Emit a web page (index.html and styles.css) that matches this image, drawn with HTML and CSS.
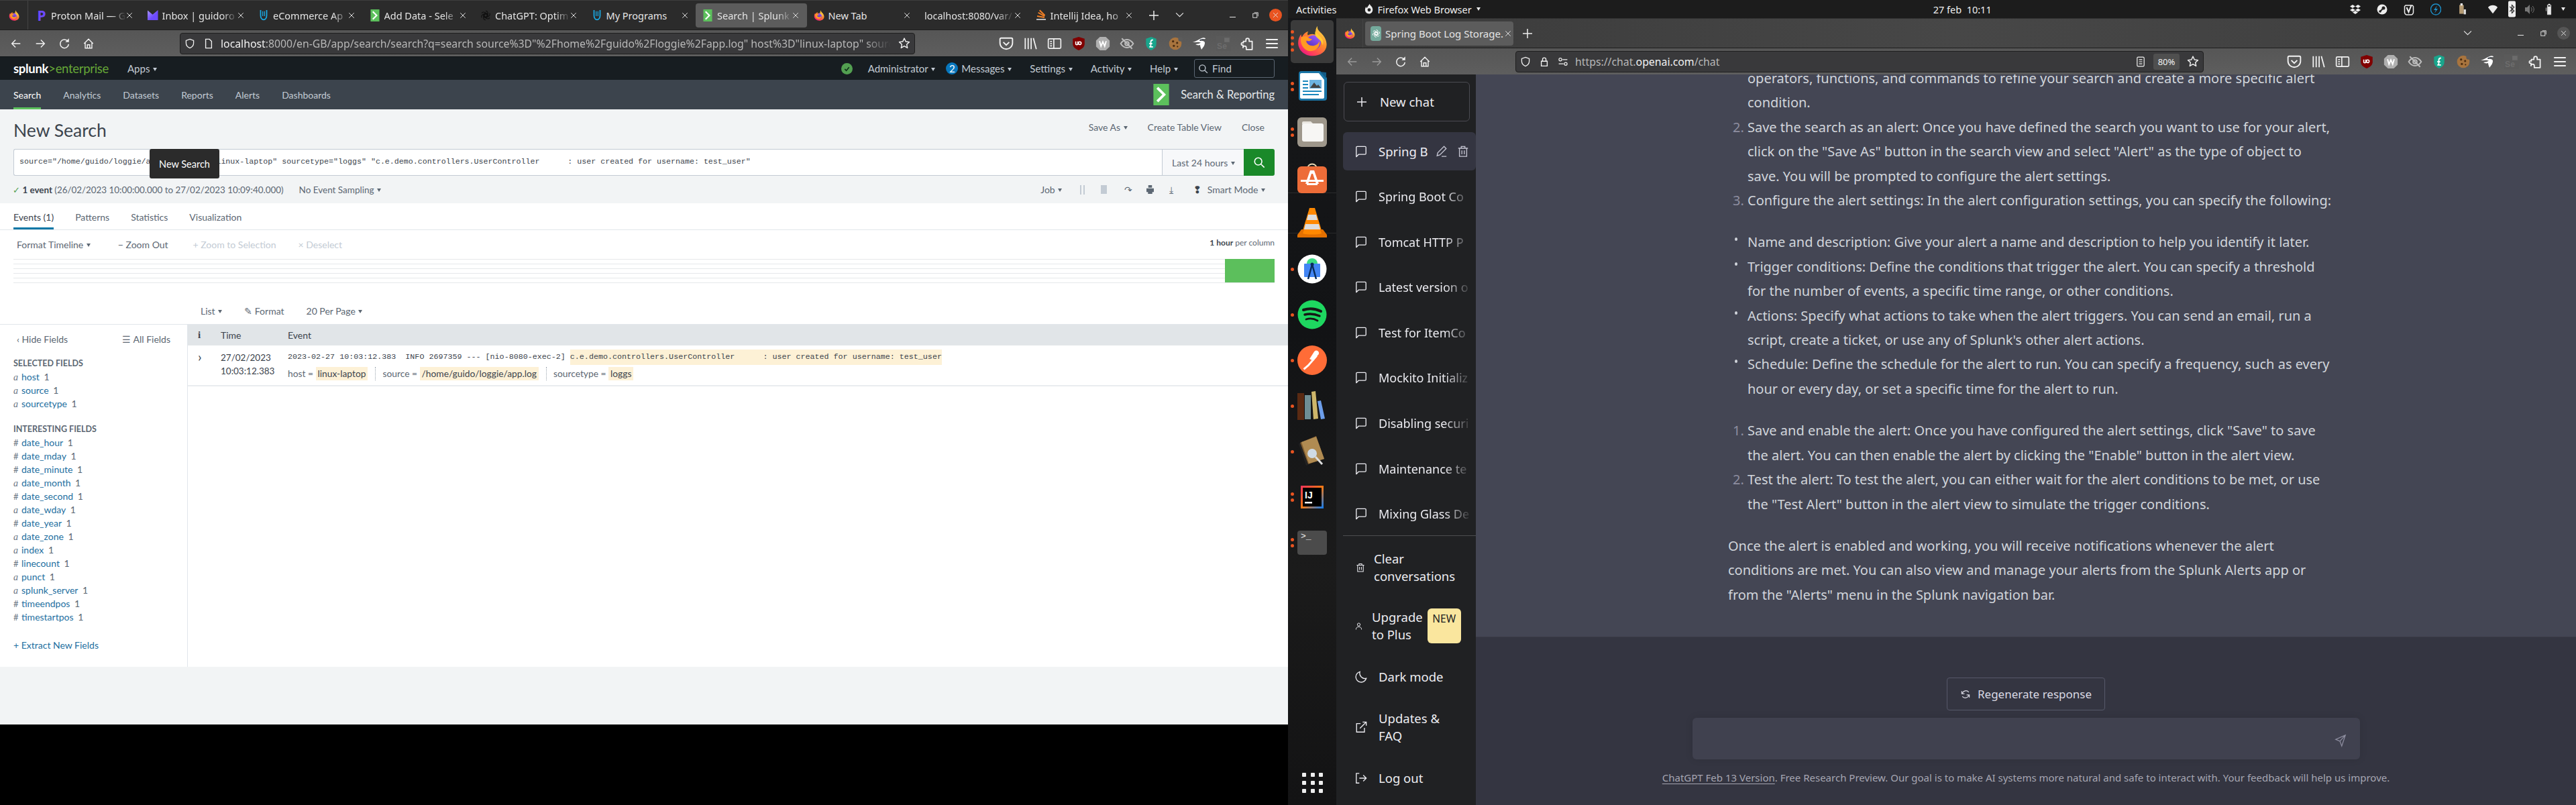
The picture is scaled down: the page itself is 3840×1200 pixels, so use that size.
FILE: index.html
```html
<!DOCTYPE html>
<html lang="en">
<head>
  <meta charset="UTF-8">
  <title>Search | Splunk and ChatGPT side by side</title>
  <link rel="stylesheet" href="styles.css">
</head>
<body>
  <svg class="defs" width="0" height="0">
    <defs>
      <linearGradient id="ffBody" x1="0.9" y1="0.1" x2="0.2" y2="1">
        <stop offset="0" stop-color="#ffe14d"/><stop offset="0.4" stop-color="#ff8a2a"/><stop offset="0.8" stop-color="#ff3a5e"/><stop offset="1" stop-color="#e31587"/>
      </linearGradient>
      <linearGradient id="ffCore" x1="0.8" y1="0" x2="0.2" y2="1">
        <stop offset="0" stop-color="#a05cff"/><stop offset="1" stop-color="#4a2bb5"/>
      </linearGradient>
      <symbol id="firefox" viewBox="0 0 64 64">
        <path fill="url(#ffBody)" d="M43 1c-1 7 3 10 8 15 6 6 11 14 11 24 0 14-13 23-29 23C16 63 3 51 3 36 3 28 6 22 9 18c0 3 1 5 2 6 2-6 7-10 13-12-2 3-2 6-1 8 6-3 12-3 18 0-3-6-2-14 2-19z"/>
        <circle cx="35" cy="35" r="15" fill="url(#ffCore)"/>
        <path fill="#ff9a22" d="M9 25c4-3 11-4 15 0 2 2 5 3 8 3-3 5-10 5-13 3 1 7 8 12 16 11 6-1 11-5 12-10 3 12-8 22-20 21C16 52 6 39 9 25z"/>
        <path fill="#ffcc33" d="M39 11c3 7 11 11 15 20 1 3 1 7 0 10-2-9-9-13-13-17-3-3-4-8-2-13z"/>
      </symbol>
      <symbol id="udemy" viewBox="0 0 16 20">
        <path fill="none" stroke="#1aa7e0" stroke-width="2" d="M3 1v9c0 4 2 7 5 7s5-3 5-7V1"/>
        <path fill="none" stroke="#1aa7e0" stroke-width="1.4" d="M6.500 3v8M9.500 3v8"/>
      </symbol>
      <symbol id="chev-green" viewBox="0 0 16 22">
        <rect width="16" height="22" fill="#5cc05c"/>
        <path fill="none" stroke="#fff" stroke-width="2.6" d="M4 4l7 7-7 7"/>
      </symbol>
      <symbol id="openai" viewBox="0 0 20 20">
        <g fill="none" stroke="currentColor" stroke-width="1.5">
          <circle cx="10" cy="10" r="3.4"/><path d="M10 1.600a4 4 0 0 1 4 4v5l-4 2.300M17.300 5.800a4 4 0 0 1-1.500 5.500l-4.300 2.500-4-2.300M17.300 14.200a4 4 0 0 1-5.500 1.500l-4.300-2.500V8.600M10 18.400a4 4 0 0 1-4-4v-5l4-2.300M2.700 14.200a4 4 0 0 1 1.500-5.500l4.300-2.500 4 2.300M2.700 5.800a4 4 0 0 1 5.500-1.500l4.300 2.500v4.600"/>
        </g>
      </symbol>
      <symbol id="back" viewBox="0 0 20 20"><path fill="none" stroke="currentColor" stroke-width="1.6" d="M17 10H3.500M9 4l-6 6 6 6"/></symbol>
      <symbol id="fwd" viewBox="0 0 20 20"><path fill="none" stroke="currentColor" stroke-width="1.6" d="M3 10h13.500M11 4l6 6-6 6"/></symbol>
      <symbol id="reload" viewBox="0 0 20 20"><path fill="none" stroke="currentColor" stroke-width="1.7" d="M15.500 6A7 7 0 1 0 17 11"/><path fill="currentColor" d="M17.500 1.500v6h-6z"/></symbol>
      <symbol id="home" viewBox="0 0 20 20"><path fill="none" stroke="currentColor" stroke-width="1.6" d="M2.500 10L10 2.500l7.500 7.500M4.500 9v8.500h11V9M8 17.500V12h4v5.500"/></symbol>
      <symbol id="shield" viewBox="0 0 20 20"><path fill="none" stroke="currentColor" stroke-width="1.6" d="M10 1.800l7 2.400v5c0 4.600-3 7.600-7 9-4-1.400-7-4.400-7-9v-5z"/></symbol>
      <symbol id="page" viewBox="0 0 20 20"><path fill="none" stroke="currentColor" stroke-width="1.7" d="M4.500 1.800h7l4 4v12.400h-11z"/></symbol>
      <symbol id="lock" viewBox="0 0 20 20"><path fill="none" stroke="currentColor" stroke-width="1.7" d="M4.500 9h11v9h-11zM6.800 9V5.800a3.200 3.200 0 0 1 6.400 0V9"/></symbol>
      <symbol id="perm" viewBox="0 0 20 20"><g fill="none" stroke="currentColor" stroke-width="1.5"><path d="M9 6h9M2 14h9"/><circle cx="5" cy="6" r="2.600"/><circle cx="15" cy="14" r="2.600"/></g></symbol>
      <symbol id="star" viewBox="0 0 20 20"><path fill="none" stroke="currentColor" stroke-width="1.6" stroke-linejoin="round" d="M10 1.800l2.500 5.400 5.800.7-4.300 4 1.200 5.800-5.200-3-5.200 3 1.200-5.800-4.300-4 5.800-.7z"/></symbol>
      <symbol id="pocket" viewBox="0 0 20 20"><path fill="none" stroke="currentColor" stroke-width="1.7" d="M3 2.500h14a1.500 1.500 0 0 1 1.500 1.500v5c0 5-4 8.500-8.500 8.500S1.500 14 1.500 9V4A1.500 1.500 0 0 1 3 2.500z"/><path fill="none" stroke="currentColor" stroke-width="1.7" d="M6 8l4 4 4-4"/></symbol>
      <symbol id="library" viewBox="0 0 20 20"><path fill="none" stroke="currentColor" stroke-width="1.6" d="M3 2.500v15M7 2.500v15M11 2.500v15M14 2.500l4 15"/></symbol>
      <symbol id="panel" viewBox="0 0 20 20"><g fill="none" stroke="currentColor" stroke-width="1.5"><rect x="1.500" y="3.500" width="17" height="13" rx="1.500"/><path d="M9 3.500v13M4 7h2.500M4 10h2.500M4 13h2.500"/></g></symbol>
      <symbol id="ublock" viewBox="0 0 20 20"><path fill="#800000" d="M10 1l8 2.400v7c0 4-3.500 7-8 8.600-4.500-1.600-8-4.600-8-8.600v-7z"/><path fill="none" stroke="#fff" stroke-width="1.500" d="M6 7v3.500c0 1.500 2.800 1.500 2.800 0V7M11.500 7.500a1.900 1.900 0 1 1-.01 3.800 1.900 1.900 0 0 1 .01-3.800z"/></symbol>
      <symbol id="wext" viewBox="0 0 20 20"><path fill="#b0b0b0" d="M6 .8h8l5.200 5.200v8L14 19.200H6L.8 14V6z"/><path fill="none" stroke="#fff" stroke-width="1.700" d="M5.500 6.500l2 7 2.500-6 2.500 6 2-7"/></symbol>
      <symbol id="eyeoff" viewBox="0 0 20 20"><g fill="none" stroke="#bdbdbd" stroke-width="1.800"><path d="M1.500 10C4 6 7 4.500 10 4.500S16 6 18.500 10C16 14 13 15.500 10 15.500S4 14 1.500 10z"/><circle cx="10" cy="10" r="2.600"/><path d="M3 3l14 14"/></g></symbol>
      <symbol id="lshield" viewBox="0 0 20 20"><path fill="#19a58c" d="M10 1l7 2.400v7c0 4-3 7-7 8.600-4-1.600-7-4.600-7-8.600v-7z"/><path fill="none" stroke="#fff" stroke-width="1.600" d="M12.500 5C10 5 9.500 6.500 9.500 8v4.500c0 1-1 2-2 2h5M7.500 10h4"/></symbol>
      <symbol id="cookie" viewBox="0 0 20 20"><circle cx="10" cy="10" r="8.500" fill="#a8743e"/><g fill="#4b2d12"><circle cx="7" cy="7" r="1.500"/><circle cx="12.500" cy="9" r="1.400"/><circle cx="8" cy="13" r="1.500"/><circle cx="13" cy="14" r="1"/></g><circle cx="17" cy="4" r="3" fill="#5b5b5b"/></symbol>
      <symbol id="swift" viewBox="0 0 22 20"><path fill="#fff" d="M1 8c4-1 8-4 13-6 4-1.500 6 0 6 1-3 0-7 1-9 3 4-.5 8 0 8 3 0 4-3 7-5 10-1-3-2-5-2-7-3 1-5 0-7-1 3-.5 6-1 8-2.500C10 7 5 8 1 8z"/><path fill="#111d2f" d="M12 4c3-1 5-1 6-.4-3 .4-5 1.400-7 2.400z"/></symbol>
      <symbol id="se" viewBox="0 0 20 20"><rect width="20" height="20" fill="#5a5a5a"/><rect x="11" y="2" width="7" height="6" fill="#6c6c6c"/><text x="1" y="17" font-family="'Liberation Sans',sans-serif" font-size="11" font-weight="700" fill="#6c6c6c">Se</text></symbol>
      <symbol id="puzzle" viewBox="0 0 20 20"><path fill="none" stroke="currentColor" stroke-width="1.600" stroke-linejoin="round" d="M4 7h3.500V5a2.200 2.200 0 0 1 4.400 0v2H16v11H8v-2.500a2.200 2.200 0 0 0-4.400 0V12H2c-1 0-1-3 0-3h2z"/></symbol>
      <symbol id="menu" viewBox="0 0 20 20"><path fill="none" stroke="currentColor" stroke-width="1.700" d="M2 4.500h16M2 10h16M2 15.500h16"/></symbol>
      <symbol id="reader" viewBox="0 0 20 20"><g fill="none" stroke="currentColor" stroke-width="1.500"><rect x="3.500" y="1.500" width="13" height="17" rx="2"/><path d="M7 6h6M7 10h6M7 14h6"/></g></symbol>
      <symbol id="search" viewBox="0 0 20 20"><g fill="none" stroke="currentColor" stroke-width="1.800"><circle cx="8.500" cy="8.500" r="6"/><path d="M13 13l5.500 5.500"/></g></symbol>
      <symbol id="close" viewBox="0 0 12 12"><path fill="none" stroke="currentColor" stroke-width="1.200" d="M1.500 1.500l9 9M10.500 1.500l-9 9"/></symbol>
      <symbol id="plus" viewBox="0 0 14 14"><path fill="none" stroke="currentColor" stroke-width="1.500" d="M7 0v14M0 7h14"/></symbol>
      <symbol id="down" viewBox="0 0 14 10"><path fill="none" stroke="currentColor" stroke-width="1.300" d="M1 1.500l6 6 6-6"/></symbol>
      <symbol id="min" viewBox="0 0 12 12"><path stroke="currentColor" stroke-width="1.400" d="M0 10h12"/></symbol>
      <symbol id="max" viewBox="0 0 12 12"><g fill="none" stroke="currentColor" stroke-width="1.200"><rect x="1" y="3" width="8" height="8"/><path d="M3.500 1H11v7.500"/></g></symbol>
      <symbol id="chat" viewBox="0 0 20 20"><path fill="none" stroke="currentColor" stroke-width="1.500" stroke-linejoin="round" d="M2 3a1.500 1.500 0 0 1 1.500-1.500h13A1.500 1.500 0 0 1 18 3v10a1.500 1.500 0 0 1-1.500 1.500H6L2 18.500z"/></symbol>
      <symbol id="pencil" viewBox="0 0 20 20"><path fill="none" stroke="currentColor" stroke-width="1.500" d="M2.500 17.500l1-5L14 2l3.500 3.500L7 16z M10 18.500h8"/></symbol>
      <symbol id="trash" viewBox="0 0 20 20"><path fill="none" stroke="currentColor" stroke-width="1.500" d="M2 5h16M7 5V2h6v3M4 5v13.500h12V5M8 8.500v6.500M12 8.500v6.500"/></symbol>
      <symbol id="user" viewBox="0 0 20 20"><g fill="none" stroke="currentColor" stroke-width="1.800"><circle cx="10" cy="5.500" r="3.800"/><path d="M2.500 19c0-5 3-7.500 7.500-7.500s7.500 2.500 7.500 7.500"/></g></symbol>
      <symbol id="moon" viewBox="0 0 20 20"><path fill="none" stroke="currentColor" stroke-width="1.500" d="M8 1.500a8.800 8.800 0 0 0 10.500 11A8.800 8.800 0 1 1 8 1.500z"/></symbol>
      <symbol id="external" viewBox="0 0 20 20"><path fill="none" stroke="currentColor" stroke-width="1.500" d="M9 4H2.500v14h13v-7M8 12L18.500 1.500M12.500 1.500h6v6"/></symbol>
      <symbol id="logout" viewBox="0 0 20 20"><path fill="none" stroke="currentColor" stroke-width="1.500" d="M7 2H2v16h5M7 10h11.500M13.500 5l5 5-5 5"/></symbol>
      <symbol id="send" viewBox="0 0 20 20"><path fill="none" stroke="currentColor" stroke-width="1.400" d="M18 1L2 8l7 3 3 8zM18 1L9 11"/></symbol>
      <symbol id="regen" viewBox="0 0 20 20"><path fill="none" stroke="currentColor" stroke-width="1.500" d="M3 4v5h5M17 16v-5h-5M4 8a7 7 0 0 1 12-2M16 12a7 7 0 0 1-12 2"/></symbol>
    </defs>
  </svg>

  <div class="screen">

    <section class="monitor-left">
      <div class="win-left">
        <header class="tabbar">
          <div class="tabbar-logo"><svg class="tab-ic"><use href="#firefox"/></svg></div>
          <div class="tab"><span class="proton">P</span><span class="tab-title">Proton Mail — G</span><svg class="tab-x"><use href="#close"/></svg></div>
          <div class="tab"><span class="pmail"></span><span class="tab-title">Inbox | guidoro</span><svg class="tab-x"><use href="#close"/></svg></div>
          <div class="tab"><svg class="tab-ic"><use href="#udemy"/></svg><span class="tab-title">eCommerce Ap</span><svg class="tab-x"><use href="#close"/></svg></div>
          <div class="tab"><svg class="tab-ic"><use href="#chev-green"/></svg><span class="tab-title">Add Data - Sele</span><svg class="tab-x"><use href="#close"/></svg></div>
          <div class="tab"><svg class="tab-ic dark-ic"><use href="#openai"/></svg><span class="tab-title">ChatGPT: Optim</span><svg class="tab-x"><use href="#close"/></svg></div>
          <div class="tab"><svg class="tab-ic"><use href="#udemy"/></svg><span class="tab-title plain">My Programs</span><svg class="tab-x"><use href="#close"/></svg></div>
          <div class="tab tab-active"><svg class="tab-ic"><use href="#chev-green"/></svg><span class="tab-title">Search | Splunk</span><svg class="tab-x"><use href="#close"/></svg></div>
          <div class="tab"><svg class="tab-ic"><use href="#firefox"/></svg><span class="tab-title plain">New Tab</span><svg class="tab-x"><use href="#close"/></svg></div>
          <div class="tab tab-noicon"><span class="tab-title">localhost:8080/var/</span><svg class="tab-x"><use href="#close"/></svg></div>
          <div class="tab"><span class="so"><i></i><i></i><i></i><i></i></span><span class="tab-title">Intellij Idea, ho</span><svg class="tab-x"><use href="#close"/></svg></div>
          <svg class="tab-plus"><use href="#plus"/></svg>
          <svg class="tab-down"><use href="#down"/></svg>
          <div class="win-btns">
            <svg class="win-min"><use href="#min"/></svg>
            <svg class="win-max"><use href="#max"/></svg>
            <span class="win-close"><svg><use href="#close"/></svg></span>
          </div>
        </header>

        <div class="toolbar">
          <svg class="nav-ic"><use href="#back"/></svg>
          <svg class="nav-ic"><use href="#fwd"/></svg>
          <svg class="nav-ic"><use href="#reload"/></svg>
          <svg class="nav-ic"><use href="#home"/></svg>
          <div class="urlbar urlbar-left">
            <svg class="url-ic"><use href="#shield"/></svg>
            <svg class="url-ic"><use href="#page"/></svg>
            <span class="url-text"><b>localhost</b>:8000/en-GB/app/search/search?q=search source%3D"%2Fhome%2Fguido%2Floggie%2Fapp.log" host%3D"linux-laptop" sourcetype%</span>
            <svg class="url-star"><use href="#star"/></svg>
          </div>
          <div class="ext-row">
            <svg class="ext"><use href="#pocket"/></svg>
            <svg class="ext"><use href="#library"/></svg>
            <svg class="ext"><use href="#panel"/></svg>
            <svg class="ext"><use href="#ublock"/></svg>
            <svg class="ext"><use href="#wext"/></svg>
            <svg class="ext"><use href="#eyeoff"/></svg>
            <svg class="ext"><use href="#lshield"/></svg>
            <svg class="ext"><use href="#cookie"/></svg>
            <svg class="ext"><use href="#swift"/></svg>
            <svg class="ext"><use href="#se"/></svg>
            <svg class="ext"><use href="#puzzle"/></svg>
            <svg class="ext"><use href="#menu"/></svg>
          </div>
        </div>

        <div class="splunk-bar">
          <div class="brand">splunk<em>&gt;enterprise</em></div>
          <span class="sp-menu apps">Apps <i class="caret"></i></span>
          <div class="sp-right">
            <span class="ok-dot"><svg viewBox="0 0 12 12"><path fill="none" stroke="#10301a" stroke-width="1.800" d="M2.500 6.500l2.500 2.500 4.500-5.500"/></svg></span>
            <span class="sp-menu admin">Administrator <i class="caret"></i></span>
            <span class="msg-badge">2</span>
            <span class="sp-menu msgs">Messages <i class="caret"></i></span>
            <span class="sp-menu settings">Settings <i class="caret"></i></span>
            <span class="sp-menu activity">Activity <i class="caret"></i></span>
            <span class="sp-menu help">Help <i class="caret"></i></span>
            <span class="find"><svg><use href="#search"/></svg>Find</span>
          </div>
        </div>

        <nav class="app-bar">
          <a class="app-link on">Search</a>
          <a class="app-link">Analytics</a>
          <a class="app-link">Datasets</a>
          <a class="app-link">Reports</a>
          <a class="app-link">Alerts</a>
          <a class="app-link">Dashboards</a>
          <div class="app-name"><svg><use href="#chev-green"/></svg>Search &amp; Reporting</div>
        </nav>

        <main class="sp-page">
          <div class="sp-head">
            <h1>New Search</h1>
            <div class="sp-actions">
              <span>Save As <i class="caret"></i></span>
              <span>Create Table View</span>
              <span>Close</span>
            </div>
          </div>

          <div class="search-row">
            <div class="search-input">source="/home/guido/loggie/app.log" host="linux-laptop" sourcetype="loggs" "c.e.demo.controllers.UserController      : user created for username: test_user"</div>
            <div class="time-pick">Last 24 hours <i class="caret"></i></div>
            <div class="search-go"><svg><use href="#search"/></svg></div>
            <div class="tooltip">New Search</div>
          </div>

          <div class="status-row">
            <span class="status-text"><span class="tick">✓</span> <b>1 event</b> (26/02/2023 10:00:00.000 to 27/02/2023 10:09:40.000)</span>
            <span class="sampling">No Event Sampling <i class="caret"></i></span>
            <div class="job-tools">
              <span class="job">Job <i class="caret"></i></span>
              <span class="jt"><span class="pause"></span></span>
              <span class="jt"><span class="stop"></span></span>
              <span class="jt jt-share">↷</span>
              <span class="jt"><svg viewBox="0 0 12 14"><path fill="#5c6773" d="M3 0h6v4H3zM0 5h12v6H9.500v3h-7v-3H0z"/></svg></span>
              <span class="jt">⤓</span>
              <span class="mode"><b>❢</b> Smart Mode <i class="caret"></i></span>
            </div>
          </div>

          <div class="results">
            <div class="res-tabs">
              <span class="res-tab on">Events (1)</span>
              <span class="res-tab">Patterns</span>
              <span class="res-tab">Statistics</span>
              <span class="res-tab">Visualization</span>
            </div>
            <div class="tl-tools">
              <span>Format Timeline <i class="caret"></i></span>
              <span class="tl-zoom">− Zoom Out</span>
              <span class="off">+ Zoom to Selection</span>
              <span class="off">× Deselect</span>
              <span class="tl-scale"><b>1 hour</b> per column</span>
            </div>
            <div class="timeline"><div class="tl-bar"></div></div>
            <div class="list-tools">
              <span>List <i class="caret"></i></span>
              <span>✎ Format</span>
              <span>20 Per Page <i class="caret"></i></span>
            </div>

            <div class="res-body">
              <aside class="fields">
                <div class="fields-top">
                  <span>‹ Hide Fields</span>
                  <span class="all-fields">☰ All Fields</span>
                </div>
                <h4>SELECTED FIELDS</h4>
                <ul class="field-list">
                  <li><i>a</i><a>host</a> 1</li>
                  <li><i>a</i><a>source</a> 1</li>
                  <li><i>a</i><a>sourcetype</a> 1</li>
                </ul>
                <h4 class="second">INTERESTING FIELDS</h4>
                <ul class="field-list">
                  <li><i class="num">#</i><a>date_hour</a> 1</li>
                  <li><i class="num">#</i><a>date_mday</a> 1</li>
                  <li><i class="num">#</i><a>date_minute</a> 1</li>
                  <li><i>a</i><a>date_month</a> 1</li>
                  <li><i class="num">#</i><a>date_second</a> 1</li>
                  <li><i>a</i><a>date_wday</a> 1</li>
                  <li><i class="num">#</i><a>date_year</a> 1</li>
                  <li><i>a</i><a>date_zone</a> 1</li>
                  <li><i>a</i><a>index</a> 1</li>
                  <li><i class="num">#</i><a>linecount</a> 1</li>
                  <li><i>a</i><a>punct</a> 1</li>
                  <li><i>a</i><a>splunk_server</a> 1</li>
                  <li><i class="num">#</i><a>timeendpos</a> 1</li>
                  <li><i class="num">#</i><a>timestartpos</a> 1</li>
                </ul>
                <a class="extract">+ Extract New Fields</a>
              </aside>
              <div class="events">
                <div class="ev-head">
                  <span class="col-i">i</span><span class="col-time">Time</span><span>Event</span>
                </div>
                <div class="ev-row">
                  <span class="col-i ev-chev">›</span>
                  <div class="col-time">27/02/2023<br>10:03:12.383</div>
                  <div class="ev-main">
                    <div class="ev-raw">2023-02-27 10:03:12.383  INFO 2697359 --- [nio-8080-exec-2] <mark>c.e.demo.controllers.UserController      : user created for username: test_user</mark></div>
                    <div class="ev-meta">
                      <span class="kv">host = <mark>linux-laptop</mark></span>
                      <span class="kv">source = <mark>/home/guido/loggie/app.log</mark></span>
                      <span class="kv">sourcetype = <mark>loggs</mark></span>
                    </div>
                  </div>
                </div>
              </div>
            </div>
          </div>
        </main>
      </div>
    </section>

    <section class="monitor-right">
      <div class="gnome-bar">
        <span class="activities">Activities</span>
        <span class="gnome-app"><svg viewBox="0 0 16 18"><path fill="#eee" d="M9 0c0 3 5 4 5 10 0 4-3 7-6.500 7S1 14 1 10.500C1 8 2 6 3 5c0 1 .5 2 1 2.500C5 5 7 3 9 0z"/><circle cx="8" cy="10.500" r="2.800" fill="#222"/></svg>Firefox Web Browser <i class="caret caret-white"></i></span>
        <span class="clock">27 feb  10:11</span>
        <div class="tray">
          <svg viewBox="0 0 16 16"><path fill="#eee" d="M4 1l4 2.500L4 6 0 3.500zM12 1l4 2.500L12 6 8 3.500zM4 6.500L8 9l-4 2.500L0 9zM12 6.500L16 9l-4 2.500L8 9zM4 12.500L8 10l4 2.500L8 15z"/></svg>
          <svg viewBox="0 0 16 16"><circle cx="8" cy="8" r="7.500" fill="#eee"/><circle cx="10" cy="6" r="2.500" fill="#222"/><circle cx="5" cy="11" r="1.800" fill="#222"/><path stroke="#222" stroke-width="2" d="M5 11l5-5"/></svg>
          <svg viewBox="0 0 16 18"><path fill="none" stroke="#eee" stroke-width="1.500" d="M3 3h10l1.500 1.500v9c0 2-2 3.500-3 3.500h-7c-1 0-3-1.500-3-3.500v-9z"/><path fill="none" stroke="#eee" stroke-width="2" d="M4.500 6l3 7 4-10"/></svg>
          <svg viewBox="0 0 16 18"><path fill="none" stroke="#1d8fc9" stroke-width="1.500" d="M8 1a7.500 8 0 1 1-.01 0z"/><path fill="#1d8fc9" d="M10 3L5 10h3l-2 5 5-7H8z"/></svg>
          <svg viewBox="0 0 14 22"><path fill="#b49a72" d="M1 3h8v16H1z"/><path fill="#ddd" d="M9 11h4v9H9z"/><path fill="#eee" d="M3 0h4v4H3z"/></svg>
          <svg viewBox="0 0 18 18"><path fill="#eee" d="M9 16L1 5.500C3 3 6 2 9 2s6 1 8 3.500z"/></svg>
          <svg class="bt" viewBox="0 0 12 26"><rect width="12" height="26" rx="2" fill="#eee"/><path fill="none" stroke="#222" stroke-width="1.200" d="M2.500 9l7 7-3.500 3.500v-13L9.500 10l-7 7"/></svg>
          <svg viewBox="0 0 16 18"><path fill="#777" d="M1 6h3l4-4v14l-4-4H1z"/><path fill="none" stroke="#777" d="M10 6c1.500 2 1.500 4 0 6M12 4c3 3 3 7 0 10"/></svg>
          <svg viewBox="0 0 18 28"><path fill="none" stroke="#eee" stroke-width="1.500" d="M5 4h8v22H5z"/><path fill="#eee" d="M7 1h4v3H7zM6 7h6v18H6z"/><path fill="#999" d="M1 10h2v8H1z"/></svg>
          <i class="caret caret-white"></i>
        </div>
      </div>

      <div class="desk">
        <aside class="dock">
          <div class="dock-item dock-on"><span class="dots"><i></i><i></i><i></i><i></i></span><svg class="dock-ff"><use href="#firefox"/></svg></div>
          <div class="dock-item"><span class="dots"><i></i><i></i></span>
            <svg class="dock-ic" viewBox="0 0 44 46"><path fill="#1a75a6" d="M34 0l10 10V40a4 4 0 0 1-4 4H6a4 4 0 0 1-4-4V4a4 4 0 0 1 4-4z"/><path fill="#fff" d="M6 3h26l8 10v26a2 2 0 0 1-2 2H6a2 2 0 0 1-2-2V5a2 2 0 0 1 2-2z"/><path fill="#135a84" d="M34 1l9 1v9z"/><path fill="#1a87bd" d="M8 14h8v2H8zM8 19h8v2H8zM8 24h8v2H8zM8 29h28v2H8zM8 34h24v2H8z"/><rect x="18" y="13" width="18" height="13" fill="#6db3e0"/><path fill="#444" d="M19 25l6-8 4 5 2-2 4 5z"/></svg></div>
          <div class="dock-item"><span class="dots"><i></i><i></i></span>
            <svg class="dock-ic" viewBox="0 0 44 44"><rect width="44" height="44" rx="6" fill="#9e978b"/><path fill="#e9e6e0" d="M7 8a2 2 0 0 1 2-2h11l4 4H7z"/><rect x="7" y="9" width="32" height="27" rx="3" fill="#f7f6f4"/></svg></div>
          <div class="dock-item">
            <svg class="dock-ic" viewBox="0 0 44 46"><path fill="none" stroke="#e9d9b4" stroke-width="2" d="M15 10c0-10 14-10 14 0"/><rect y="6" width="44" height="40" rx="6" fill="#ed6c38"/><path fill="#fff" d="M19 12h6l7 20h-4l-5-15h-2l-5 15h-4zM5 26h34v3H5zM14 31h16v3H14z"/></svg></div>
          <div class="dock-item">
            <svg class="dock-ic" viewBox="0 0 44 46"><path fill="#ff8800" d="M18 0h8l12 40H6z"/><path fill="#ddd" d="M16 10h12l2 8H14zM12 24h20l2 8H10z"/><path fill="#e37000" d="M0 40l6-8h4l-2 6c6 2 22 2 28 0l-2-6h4l6 8v4H0z"/></svg></div>
          <div class="dock-item"><span class="dots"><i></i></span>
            <svg class="dock-ic" viewBox="0 0 44 44"><circle cx="22" cy="22" r="21.500" fill="#fff"/><path fill="#3ddc84" d="M14 14a8 8 0 0 1 16 0z"/><rect x="10" y="14" width="24" height="20" rx="1" fill="#4285f4"/><path fill="none" stroke="#0a2d5c" stroke-width="2.500" d="M22 15L16 37M22 15l6 22"/><circle cx="22" cy="15" r="2.500" fill="#0a2d5c"/></svg></div>
          <div class="dock-item"><span class="dots"><i></i></span>
            <svg class="dock-ic" viewBox="0 0 44 44"><ellipse cx="22" cy="22" rx="21.500" ry="21.500" fill="#1ed760"/><g fill="none" stroke="#161616" stroke-linecap="round"><path stroke-width="4" d="M9 15c9-3 18-2 26 2"/><path stroke-width="3.400" d="M11 22c8-2 15-1 22 2"/><path stroke-width="2.800" d="M13 29c6-2 12-1 17 2"/></g></svg></div>
          <div class="dock-item"><span class="dots"><i></i></span>
            <svg class="dock-ic" viewBox="0 0 46 46"><circle cx="23" cy="23" r="23" fill="#ff6c37"/><path fill="none" stroke="#fff" stroke-width="3" d="M10 37l7-6 13-15"/><path fill="#fff" d="M26 10a4 4 0 1 1 6 5l-7 9-6-3z"/></svg></div>
          <div class="dock-item"><span class="dots"><i></i></span>
            <svg class="dock-ic" viewBox="0 0 44 44"><rect x="0" y="3" width="10" height="40" fill="#5a2a12"/><rect x="11" y="6" width="9" height="36" fill="#6f8e94"/><path fill="#cdb66a" d="M21 1l6-1 4 41-7 1z"/><path fill="#6d9eeb" d="M30 15l5-1 6 27-6 1z"/></svg></div>
          <div class="dock-item"><span class="dots"><i></i></span>
            <svg class="dock-ic" viewBox="0 0 44 46"><path fill="#7d5b2f" d="M4 10L28 0l12 34-24 8z"/><path fill="#b08b52" d="M6 9L28 1l12 33-23 7z"/><path fill="#222" d="M4 10l12 33-3 1L2 12z"/><circle cx="22" cy="26" r="7" fill="#cfdbe6"/><path stroke="#ddd" stroke-width="3" d="M27 31l10 11"/></svg></div>
          <div class="dock-item"><span class="dots"><i></i><i></i></span>
            <svg class="dock-ic dock-ij" viewBox="0 0 34 34"><defs><linearGradient id="ij" x1="0" y1="0" x2="1" y2="1"><stop offset="0" stop-color="#fe315d"/><stop offset="0.5" stop-color="#f97a12"/><stop offset="1" stop-color="#087cfa"/></linearGradient></defs><rect width="34" height="34" fill="url(#ij)"/><rect x="3" y="3" width="28" height="28" fill="#000"/><text x="6" y="19" font-family="'Liberation Sans',sans-serif" font-size="14" font-weight="700" fill="#fff">IJ</text><rect x="6" y="24" width="11" height="2.500" fill="#fff"/></svg></div>
          <div class="dock-item"><span class="dots"><i></i><i></i></span>
            <div class="term">&gt;_</div></div>
          <div class="apps-grid"><i></i><i></i><i></i><i></i><i></i><i></i><i></i><i></i><i></i></div>
        </aside>

        <div class="win-right">
          <header class="tabbar tabbar-right">
            <div class="tabbar-logo"><svg class="tab-ic"><use href="#firefox"/></svg></div>
            <div class="tab tab-active tab-chat"><span class="gpt-ic"><svg><use href="#openai"/></svg></span><span class="tab-title">Spring Boot Log Storage.</span><svg class="tab-x"><use href="#close"/></svg></div>
            <svg class="tab-plus"><use href="#plus"/></svg>
            <svg class="tab-down"><use href="#down"/></svg>
            <div class="win-btns">
              <svg class="win-min"><use href="#min"/></svg>
              <svg class="win-max"><use href="#max"/></svg>
              <span class="win-close grey"><svg><use href="#close"/></svg></span>
            </div>
          </header>
          <div class="toolbar toolbar-right">
            <svg class="nav-ic dim"><use href="#back"/></svg>
            <svg class="nav-ic dim"><use href="#fwd"/></svg>
            <svg class="nav-ic"><use href="#reload"/></svg>
            <svg class="nav-ic"><use href="#home"/></svg>
            <div class="urlbar urlbar-right">
              <svg class="url-ic"><use href="#shield"/></svg>
              <svg class="url-ic"><use href="#lock"/></svg>
              <svg class="url-ic"><use href="#perm"/></svg>
              <span class="url-text"><s>https://chat.</s><b>openai.com</b><s>/chat</s></span>
              <svg class="url-reader"><use href="#reader"/></svg>
              <span class="zoom-pill">80%</span>
              <svg class="url-star"><use href="#star"/></svg>
            </div>
            <div class="ext-row">
              <svg class="ext"><use href="#pocket"/></svg>
              <svg class="ext"><use href="#library"/></svg>
              <svg class="ext"><use href="#panel"/></svg>
              <svg class="ext"><use href="#ublock"/></svg>
              <svg class="ext"><use href="#wext"/></svg>
              <svg class="ext"><use href="#eyeoff"/></svg>
              <svg class="ext"><use href="#lshield"/></svg>
              <svg class="ext"><use href="#cookie"/></svg>
              <svg class="ext"><use href="#swift"/></svg>
              <svg class="ext"><use href="#se"/></svg>
              <svg class="ext"><use href="#puzzle"/></svg>
              <svg class="ext"><use href="#menu"/></svg>
            </div>
          </div>

          <div class="gpt">
            <aside class="gpt-side">
              <div class="new-chat"><svg><use href="#plus"/></svg>New chat</div>
              <div class="chat-list">
                <div class="chat-row on"><svg class="chat-ic"><use href="#chat"/></svg><span class="chat-name">Spring B</span><svg class="row-act"><use href="#pencil"/></svg><svg class="row-act"><use href="#trash"/></svg></div>
                <div class="chat-row"><svg class="chat-ic"><use href="#chat"/></svg><span class="chat-name fade">Spring Boot Co</span></div>
                <div class="chat-row"><svg class="chat-ic"><use href="#chat"/></svg><span class="chat-name fade">Tomcat HTTP P</span></div>
                <div class="chat-row"><svg class="chat-ic"><use href="#chat"/></svg><span class="chat-name fade">Latest version o</span></div>
                <div class="chat-row"><svg class="chat-ic"><use href="#chat"/></svg><span class="chat-name fade">Test for ItemCo</span></div>
                <div class="chat-row"><svg class="chat-ic"><use href="#chat"/></svg><span class="chat-name fade">Mockito Initializ</span></div>
                <div class="chat-row"><svg class="chat-ic"><use href="#chat"/></svg><span class="chat-name fade">Disabling securi</span></div>
                <div class="chat-row"><svg class="chat-ic"><use href="#chat"/></svg><span class="chat-name fade">Maintenance te</span></div>
                <div class="chat-row"><svg class="chat-ic"><use href="#chat"/></svg><span class="chat-name fade">Mixing Glass De</span></div>
              </div>
              <div class="side-foot">
                <div class="foot-row clear"><svg class="small"><use href="#trash"/></svg><span>Clear<br>conversations</span></div>
                <div class="foot-row plus-row"><svg class="tiny"><use href="#user"/></svg><span>Upgrade<br>to Plus</span><span class="new-tag">NEW</span></div>
                <div class="foot-row"><svg><use href="#moon"/></svg><span>Dark mode</span></div>
                <div class="foot-row"><svg><use href="#external"/></svg><span>Updates &amp;<br>FAQ</span></div>
                <div class="foot-row"><svg><use href="#logout"/></svg><span>Log out</span></div>
              </div>
            </aside>

            <div class="gpt-main">
              <article class="thread">
                <ol start="1" class="no-mark">
                  <li>operators, functions, and commands to refine your search and create a more specific alert<br>condition.</li>
                </ol>
                <ol start="2">
                  <li>Save the search as an alert: Once you have defined the search you want to use for your alert,<br>click on the "Save As" button in the search view and select "Alert" as the type of object to<br>save. You will be prompted to configure the alert settings.</li>
                  <li>Configure the alert settings: In the alert configuration settings, you can specify the following:</li>
                </ol>
                <ul>
                  <li>Name and description: Give your alert a name and description to help you identify it later.</li>
                  <li>Trigger conditions: Define the conditions that trigger the alert. You can specify a threshold<br>for the number of events, a specific time range, or other conditions.</li>
                  <li>Actions: Specify what actions to take when the alert triggers. You can send an email, run a<br>script, create a ticket, or use any of Splunk's other alert actions.</li>
                  <li>Schedule: Define the schedule for the alert to run. You can specify a frequency, such as every<br>hour or every day, or set a specific time for the alert to run.</li>
                </ul>
                <ol>
                  <li>Save and enable the alert: Once you have configured the alert settings, click "Save" to save<br>the alert. You can then enable the alert by clicking the "Enable" button in the alert view.</li>
                  <li>Test the alert: To test the alert, you can either wait for the alert conditions to be met, or use<br>the "Test Alert" button in the alert view to simulate the trigger conditions.</li>
                </ol>
                <p>Once the alert is enabled and working, you will receive notifications whenever the alert<br>conditions are met. You can also view and manage your alerts from the Splunk Alerts app or<br>from the "Alerts" menu in the Splunk navigation bar.</p>
              </article>
              <div class="composer">
                <div class="regen"><svg><use href="#regen"/></svg>Regenerate response</div>
                <div class="prompt"><svg><use href="#send"/></svg></div>
                <div class="legal"><u>ChatGPT Feb 13 Version</u>. Free Research Preview. Our goal is to make AI systems more natural and safe to interact with. Your feedback will help us improve.</div>
              </div>
            </div>
          </div>
        </div>
      </div>
    </section>
  </div>
</body>
</html>
```

FILE: styles.css
```css
html, body {
  margin: 0;
  padding: 0;
  background: #000;
  overflow: hidden;
}
.defs {
  position: absolute;
}
.screen {
  display: flex;
  width: 3840px;
  height: 1200px;
  font-family: "Noto Sans", sans-serif;
}
svg {
  display: block;
}
i {
  font-style: normal;
}

/* left monitor */
.monitor-left {
  width: 1920px;
  height: 1200px;
  background: #000;
}
.win-left {
  height: 1080px;
  display: flex;
  flex-direction: column;
}

/* firefox chrome */
.tabbar {
  height: 43px;
  flex: none;
  display: flex;
  align-items: center;
  background: #2b2b2b;
  border-top: 1px solid #3d3d3d;
  box-sizing: content-box;
  color: #e4e4e4;
  font-size: 14.5px;
}
.tabbar-logo {
  width: 42px;
  height: 43px;
  display: flex;
  align-items: center;
  justify-content: center;
  border-right: 1px solid #444;
  box-sizing: border-box;
  margin-right: 2px;
}
.tab {
  width: 165.5px;
  height: 36px;
  flex: none;
  display: flex;
  align-items: center;
  box-sizing: border-box;
  padding-left: 10px;
  border-radius: 4px;
}
.tab-active {
  background: #5c5c5c;
}
.tab-ic {
  width: 16px;
  height: 18px;
  flex: none;
}
.dark-ic {
  color: #111;
}
.proton {
  width: 16px;
  flex: none;
  color: #6d4aff;
  font-weight: 700;
  font-size: 21px;
  line-height: 20px;
  text-align: center;
}
.pmail {
  width: 16px;
  height: 15px;
  flex: none;
  background: linear-gradient(135deg, #a995ff 0%, #6d4aff 60%);
  clip-path: polygon(0 0, 50% 45%, 100% 0, 100% 100%, 0 100%);
}
.so {
  width: 16px;
  flex: none;
  display: flex;
  flex-direction: column;
  gap: 2px;
  align-items: center;
}
.so i {
  display: block;
  width: 11px;
  height: 2px;
  background: #f48024;
}
.so i:nth-child(1) { transform: rotate(45deg) translateX(3px); }
.so i:nth-child(2) { transform: rotate(30deg) translateX(1px); }
.so i:nth-child(3) { transform: rotate(10deg); }
.so i:nth-child(4) { background: #bcbbbb; width: 14px; }
.tab-title {
  flex: none;
  width: 112px;
  margin-left: 6px;
  overflow: hidden;
  white-space: nowrap;
  -webkit-mask-image: linear-gradient(to right, #000 80%, transparent 100%);
  mask-image: linear-gradient(to right, #000 80%, transparent 100%);
}
.tab-title.plain {
  -webkit-mask-image: none;
  mask-image: none;
}
.tab-noicon .tab-title {
  margin-left: 0;
  width: 134px;
}
.tab-x {
  width: 10px;
  height: 10px;
  flex: none;
  color: #dcdcdc;
}
.tab-plus {
  width: 14px;
  height: 14px;
  flex: none;
  margin-left: 14px;
  color: #eee;
}
.tab-down {
  width: 13px;
  height: 9px;
  flex: none;
  margin-left: 25px;
  color: #e4e4e4;
}
.win-btns {
  margin-left: auto;
  display: flex;
  align-items: center;
  margin-right: 9px;
  color: #e8e8e8;
}
.win-min {
  width: 9px;
  height: 9px;
}
.win-max {
  width: 9px;
  height: 9px;
  margin-left: 25px;
}
.win-close {
  width: 19px;
  height: 19px;
  margin-left: 16px;
  border-radius: 50%;
  background: #e95420;
  display: flex;
  align-items: center;
  justify-content: center;
}
.win-close.grey {
  background: #555;
}
.win-close svg {
  width: 9px;
  height: 9px;
}
.toolbar {
  height: 40px;
  flex: none;
  display: flex;
  align-items: center;
  background: linear-gradient(#565656, #5e5e5e);
  border-top: 1px solid #1e1e1e;
  box-sizing: border-box;
  color: #f2f2f2;
  padding-left: 15px;
}
.nav-ic {
  width: 18px;
  height: 18px;
  margin-right: 18px;
  flex: none;
}
.nav-ic.dim {
  color: #9a9a9a;
}
.urlbar {
  height: 32px;
  display: flex;
  align-items: center;
  box-sizing: border-box;
  background: #39393b;
  border: 1px solid #1f1f1f;
  border-radius: 4px;
  flex: none;
  margin-left: 109px;
  padding-left: 6px;
}
.urlbar-left {
  width: 1096px;
}
.url-ic {
  width: 16px;
  height: 18px;
  margin-right: 12px;
  flex: none;
}
.url-text {
  flex: 1;
  min-width: 0;
  margin-left: -2px;
  overflow: hidden;
  white-space: nowrap;
  font-size: 15.8px;
  color: #b8b8b8;
  -webkit-mask-image: linear-gradient(to right, #000 96%, transparent 100%);
  mask-image: linear-gradient(to right, #000 96%, transparent 100%);
}
.url-text b {
  font-weight: 400;
  color: #f2f2f2;
}
.url-text s {
  text-decoration: none;
}
.url-star {
  width: 18px;
  height: 19px;
  flex: none;
  margin: 0 6px 0 11px;
}
.ext-row {
  margin-left: auto;
  display: flex;
  align-items: center;
  padding-right: 6px;
}
.ext {
  width: 22px;
  height: 22px;
  padding: 0 7px;
  flex: none;
  box-sizing: content-box;
}

/* splunk header bars */
.splunk-bar {
  height: 35px;
  flex: none;
  display: flex;
  align-items: center;
  background: #171d21;
  font-family: Lato, sans-serif;
  font-size: 15px;
  color: #c3cbd4;
  padding-left: 20px;
  border-top: 1px solid #0e1215;
  box-sizing: border-box;
}
.brand {
  width: 170px;
  color: #fff;
  font-size: 18.5px;
  letter-spacing: -0.3px;
  font-weight: 700;
  line-height: 30px;
  white-space: nowrap;
}
.brand em {
  font-style: normal;
  font-weight: 400;
  color: #65a637;
}
.caret {
  display: inline-block;
  width: 0;
  height: 0;
  border-left: 3.5px solid transparent;
  border-right: 3.5px solid transparent;
  border-top: 5px solid currentColor;
  vertical-align: 2px;
  margin-left: 1px;
}
.caret-white {
  color: #eee;
}
.sp-right {
  margin-left: auto;
  display: flex;
  align-items: center;
  padding-right: 20px;
}
.ok-dot {
  width: 17px;
  height: 17px;
  border-radius: 50%;
  background: #53a051;
  display: flex;
  align-items: center;
  justify-content: center;
}
.ok-dot svg {
  width: 11px;
  height: 11px;
}
.admin { margin-left: 23px; }
.msg-badge {
  width: 18px;
  height: 18px;
  margin-left: 16px;
  border-radius: 50%;
  background: #0877bd;
  color: #fff;
  text-align: center;
  line-height: 18px;
}
.msgs { margin-left: 5px; }
.settings { margin-left: 27px; }
.activity { margin-left: 27px; }
.help { margin-left: 27px; }
.find {
  width: 120px;
  height: 28px;
  margin-left: 24px;
  box-sizing: border-box;
  border: 1px solid #5c6773;
  border-radius: 3px;
  display: flex;
  align-items: center;
  padding-left: 5px;
  gap: 6px;
}
.find svg {
  width: 15px;
  height: 15px;
}
.app-bar {
  height: 44px;
  flex: none;
  display: flex;
  align-items: stretch;
  background: #3c444d;
  font-family: Lato, sans-serif;
  font-size: 14px;
  color: #c3cbd4;
  padding-left: 20px;
  gap: 33px;
}
.app-link {
  display: flex;
  align-items: center;
  border-bottom: 3px solid transparent;
  box-sizing: border-box;
  padding-top: 3px;
}
.app-link.on {
  color: #fff;
  border-bottom-color: #5cc05c;
}
.app-name {
  margin-left: auto;
  display: flex;
  align-items: center;
  gap: 13px;
  padding-right: 20px;
  color: #e5e8ea;
  font-size: 16.5px;
}
.app-name svg {
  width: 32px;
  height: 32px;
}

/* search page */
.sp-page {
  flex: 1;
  display: flex;
  flex-direction: column;
  background: #f2f4f5;
  font-family: Lato, sans-serif;
  font-size: 14px;
  color: #5c6773;
}
.sp-head {
  height: 59px;
  flex: none;
  display: flex;
  align-items: center;
  justify-content: space-between;
  padding: 0 35px 0 20px;
}
.sp-head h1 {
  margin: 3px 0 0;
  font-size: 26.5px;
  font-weight: 400;
  color: #3c444d;
}
.sp-actions {
  display: flex;
  gap: 30px;
  padding-bottom: 6px;
}
.search-row {
  position: relative;
  height: 40px;
  flex: none;
  display: flex;
  margin: 0 20px;
}
.search-input {
  flex: 1;
  box-sizing: border-box;
  background: #fff;
  border: 1px solid #c3cbd4;
  border-right: none;
  font-family: "Liberation Mono", monospace;
  font-size: 11.65px;
  line-height: 36px;
  color: #3c444d;
  padding-left: 8px;
  white-space: pre;
  border-radius: 3px 0 0 3px;
}
.time-pick {
  width: 122px;
  flex: none;
  box-sizing: border-box;
  background: #f7f8fa;
  border: 1px solid #c3cbd4;
  border-right: none;
  padding-left: 14px;
  line-height: 40px;
  white-space: nowrap;
}
.search-go {
  width: 46px;
  flex: none;
  background: #1a8929;
  color: #fff;
  display: flex;
  align-items: center;
  justify-content: center;
  border-radius: 0 3px 3px 0;
}
.search-go svg {
  width: 18px;
  height: 18px;
}
.tooltip {
  position: absolute;
  left: 203px;
  top: 0;
  width: 104px;
  height: 44px;
  background: #2b2b2b;
  color: #fff;
  font-size: 14.5px;
  line-height: 46px;
  text-align: center;
  border-radius: 3px;
}
.status-row {
  height: 41px;
  flex: none;
  display: flex;
  align-items: center;
  padding: 0 0 0 19px;
}
.status-text {
  font-size: 13.4px;
  white-space: nowrap;
}
.status-row b {
  color: #3c444d;
}
.tick {
  color: #53a051;
}
.sampling {
  margin-left: 23px;
  font-size: 13.5px;
}
.job-tools {
  margin-left: auto;
  display: flex;
  align-items: center;
  padding-right: 34px;
}
.jt {
  width: 32px;
  height: 16px;
  display: flex;
  align-items: center;
  justify-content: center;
}
.jt-share {
  margin-left: 5px;
}
.jt svg {
  width: 11px;
  height: 13px;
}
.pause {
  width: 7px;
  height: 14px;
  border-left: 2px solid #c3cbd4;
  border-right: 2px solid #c3cbd4;
  box-sizing: border-box;
}
.stop {
  width: 9px;
  height: 13px;
  background: #c3cbd4;
}
.job {
  margin-right: 14px;
}
.mode {
  margin-left: 17px;
}
.mode b {
  margin-right: 5px;
}
.results {
  display: flex;
  flex-direction: column;
  background: #fff;
  height: 691px;
  flex: none;
}
.res-tabs {
  height: 39px;
  flex: none;
  display: flex;
  border-bottom: 1px solid #e1e6eb;
  padding-left: 20px;
  gap: 32px;
}
.res-tab {
  line-height: 41px;
  height: 39px;
  box-sizing: border-box;
}
.res-tab.on {
  color: #3c444d;
  border-bottom: 3px solid #0877a6;
}
.tl-tools {
  height: 43px;
  flex: none;
  display: flex;
  align-items: center;
  padding: 0 20px 0 25px;
  gap: 33px;
}
.tl-tools .tl-zoom {
  margin: 0 4px 0 8px;
}
.off {
  color: #c3cbd4;
}
.tl-scale {
  margin-left: auto;
  font-size: 12px;
  padding-bottom: 6px;
}
.tl-scale b {
  font-weight: 700;
  color: #3c444d;
}
.timeline {
  height: 36px;
  flex: none;
  margin: 0 20px;
  box-sizing: border-box;
  display: flex;
  justify-content: flex-end;
  background: repeating-linear-gradient(#e6e8ea 0 1px, #fff 1px 7px);
  border-bottom: 1px solid #e6e8ea;
}
.tl-bar {
  width: 74px;
  background: #5cbf5c;
}
.list-tools {
  height: 61px;
  flex: none;
  display: flex;
  align-items: center;
  padding-left: 299px;
  gap: 33px;
  box-sizing: border-box;
  padding-top: 21px;
}
.res-body {
  flex: 1;
  display: flex;
  border-top: 1px solid #e1e6eb;
  min-height: 0;
}
.fields {
  width: 280px;
  flex: none;
  box-sizing: border-box;
  border-right: 1px solid #e1e6eb;
  padding: 0 0 0 20px;
}
.fields-top {
  display: flex;
  justify-content: space-between;
  padding: 12px 25px 0 5px;
  line-height: 20px;
}
.fields h4 {
  margin: 16px 0 0;
  font-size: 12.5px;
  font-weight: 700;
  line-height: 20px;
  color: #5c6773;
}
.fields h4.second {
  margin-top: 18px;
}
.field-list {
  list-style: none;
  margin: 0;
  padding: 0;
}
.field-list li {
  height: 20px;
  line-height: 20px;
  color: #5c6773;
  white-space: nowrap;
}
.field-list i {
  display: inline-block;
  width: 12px;
  font-family: "Liberation Serif", serif;
  font-style: italic;
  font-size: 14px;
  color: #6c7885;
}
.field-list i.num {
  font-family: Lato, sans-serif;
  font-style: normal;
  font-size: 13px;
}
.field-list a {
  color: #1e6f9f;
  margin-right: 3px;
}
.extract {
  display: block;
  margin-top: 22px;
  color: #1e6f9f;
  line-height: 20px;
}
.events {
  flex: 1;
}
.ev-head {
  height: 31px;
  display: flex;
  align-items: center;
  background: #e1e5e8;
  color: #3c444d;
}
.col-i {
  width: 49px;
  flex: none;
  padding-left: 15px;
  box-sizing: border-box;
  font-family: "Liberation Serif", serif;
  font-weight: 700;
  font-size: 15px;
}
.col-time {
  width: 100px;
  flex: none;
}
.ev-row {
  display: flex;
  height: 59px;
  border-bottom: 2px solid #e9ecef;
  color: #3c444d;
}
.ev-chev {
  font-family: Lato, sans-serif;
  font-weight: 400;
  font-size: 20px;
  line-height: 32px;
}
.ev-row .col-time {
  padding-top: 8px;
  line-height: 20px;
  font-size: 13.5px;
}
.ev-main {
  flex: 1;
  padding-top: 6px;
}
.ev-raw {
  font-family: "Liberation Mono", monospace;
  font-size: 11.7px;
  line-height: 23px;
  white-space: pre;
}
mark {
  background: #fdf1d6;
  color: inherit;
}
.ev-raw mark {
  display: inline-block;
}
.ev-meta {
  display: flex;
  margin-top: 3px;
  line-height: 20px;
  font-size: 13.8px;
  color: #5c6773;
}
.kv {
  padding-right: 11px;
  margin-right: 10px;
  border-right: 1px dotted #9aa4ae;
  white-space: nowrap;
}
.kv:last-child {
  border-right: none;
}
.kv mark {
  display: inline-block;
  padding: 0 3px;
  color: #3c444d;
}

/* right monitor */
.monitor-right {
  width: 1920px;
  height: 1200px;
  display: flex;
  flex-direction: column;
  background: #000;
}
.gnome-bar {
  height: 27px;
  flex: none;
  display: flex;
  align-items: center;
  background: #1c1c1c;
  color: #efefef;
  font-size: 14.5px;
}
.activities {
  margin-left: 12px;
}
.gnome-app {
  margin-left: 42px;
  display: flex;
  align-items: center;
  gap: 5px;
}
.gnome-app svg {
  width: 14px;
  height: 17px;
}
.gnome-app .caret {
  margin-left: 2px;
  vertical-align: 0;
}
.clock {
  margin-left: 675px;
  white-space: pre;
}
.tray {
  margin-left: auto;
  display: flex;
  align-items: center;
  padding-right: 16px;
}
.tray svg {
  width: 16px;
  height: 18px;
  margin-left: 24px;
}
.tray svg.bt {
  width: 11px;
  height: 25px;
  margin-left: 15px;
}
.tray svg:nth-child(6) { margin-left: 29px; }
.tray svg:nth-child(8) { margin-left: 13px; }
.tray svg:nth-child(9) { margin-left: 13px; }
.tray .caret { margin-left: 10px; vertical-align: 0; }
.desk {
  flex: 1;
  display: flex;
  min-height: 0;
}
.dock {
  width: 72px;
  flex: none;
  display: flex;
  flex-direction: column;
  background:
    linear-gradient(180deg, transparent 0 260px, #2a2b2c 260px 261px, transparent 261px 320px, #28292a 320px 321px, transparent 321px),
    linear-gradient(180deg, #17181a, #121315 40%, #1b1b1b 70%, #131314);
}
.dock-item {
  height: 68px;
  position: relative;
  display: flex;
  align-items: center;
  justify-content: center;
}
.dock-on::before {
  content: "";
  position: absolute;
  left: 4px;
  right: 4px;
  top: 3px;
  bottom: 1px;
  background: #3b3b3b;
  border-radius: 5px;
}
.dots {
  position: absolute;
  left: 4px;
  top: 0;
  bottom: 0;
  z-index: 1;
  display: flex;
  flex-direction: column;
  justify-content: center;
  gap: 4px;
}
.dots i {
  display: block;
  width: 5px;
  height: 5px;
  border-radius: 50%;
  background: #e95420;
}
.dock-ff {
  width: 46px;
  height: 46px;
  position: relative;
}
.dock-ic {
  width: 44px;
  height: 46px;
}
.dock-ij {
  width: 34px;
  height: 34px;
}
.term {
  width: 44px;
  height: 36px;
  background: #4b4b4b;
  border-radius: 4px;
  color: #f0f0f0;
  font-family: "Liberation Mono", monospace;
  font-size: 13px;
  padding-left: 5px;
  box-sizing: border-box;
  line-height: 18px;
}
.apps-grid {
  margin-top: auto;
  margin-bottom: 18px;
  margin-left: 21px;
  width: 31px;
  display: grid;
  grid-template-columns: repeat(3, 6px);
  grid-auto-rows: 6px;
  gap: 6px 6.5px;
}
.apps-grid i {
  background: #eee;
  border-radius: 1px;
}
.win-right {
  flex: 1;
  min-width: 0;
  display: flex;
  flex-direction: column;
}
.tabbar-right {
  background: linear-gradient(90deg, #3a3a3a, #474747 50%, #3d3d3d);
  height: 43px;
  border-top: 1px solid #303030;
}
.tabbar-right .tab-active {
  width: 221px;
  margin-left: 3px;
  padding-left: 8px;
}
.tabbar-right .tabbar-logo {
  width: 40px;
  margin-right: 0;
}
.gpt-ic {
  width: 16px;
  height: 22px;
  flex: none;
  border-radius: 4px;
  background: #74aa9c;
  color: #fff;
  display: flex;
  align-items: center;
  justify-content: center;
}
.gpt-ic svg {
  width: 13px;
  height: 14px;
}
.tab-chat .tab-title {
  width: 176px;
  font-size: 15px;
  -webkit-mask-image: none;
  mask-image: none;
}
.tab-chat .tab-x {
  margin-left: 2px;
}
.tabbar-right .tab-plus {
  margin-left: 14px;
}
.tabbar-right .tab-down {
  margin-left: auto;
}
.tabbar-right .win-btns {
  margin-left: 68px;
}
.urlbar-right {
  width: 1026px;
  margin-left: 108px;
}
.urlbar-right .url-text {
  -webkit-mask-image: none;
  mask-image: none;
}
.url-reader {
  width: 16px;
  height: 20px;
  flex: none;
  margin-right: 11px;
}
.zoom-pill {
  width: 39px;
  height: 24px;
  flex: none;
  background: #4f4f4f;
  border-radius: 3px;
  font-size: 13px;
  line-height: 24px;
  text-align: center;
}

/* chatgpt */
.gpt {
  flex: 1;
  min-height: 0;
  display: flex;
  font-size: 18.5px;
  color: #ececf1;
}
.gpt-side {
  width: 208px;
  flex: none;
  box-sizing: border-box;
  background: #202123;
  padding: 11px 0 0 10px;
  display: flex;
  flex-direction: column;
}
.new-chat {
  width: 188px;
  height: 59px;
  margin-left: 1px;
  box-sizing: border-box;
  border: 1px solid #4b4b52;
  border-radius: 6px;
  display: flex;
  align-items: center;
  padding-left: 19px;
  gap: 20px;
}
.new-chat svg {
  width: 14px;
  height: 14px;
}
.chat-list {
  margin-top: 16px;
  display: flex;
  flex-direction: column;
  gap: 10.4px;
  padding-bottom: 3px;
  border-bottom: 1px solid #4d4d4f;
}
.chat-row {
  height: 57.2px;
  width: 198px;
  box-sizing: border-box;
  display: flex;
  align-items: center;
  padding-left: 18px;
  border-radius: 6px;
  white-space: nowrap;
}
.chat-row.on {
  background: #343541;
}
.chat-ic {
  width: 18px;
  height: 18px;
  flex: none;
}
.chat-name {
  margin-left: 17px;
}
.chat-name.fade {
  width: 140px;
  overflow: hidden;
  font-size: 18px;
  -webkit-mask-image: linear-gradient(to right, #000 70%, transparent 100%);
  mask-image: linear-gradient(to right, #000 70%, transparent 100%);
}
.row-act {
  width: 18px;
  height: 19px;
  flex: none;
  color: #c5c5d2;
}
.chat-row.on .chat-name {
  width: 70px;
  margin-right: 15px;
}
.row-act + .row-act {
  margin-left: 14px;
}
.side-foot {
  margin-top: 21px;
  display: flex;
  flex-direction: column;
  gap: 23.5px;
}
.foot-row {
  height: 52px;
  display: flex;
  align-items: center;
  padding-left: 18px;
  gap: 17px;
  line-height: 26px;
}
.foot-row svg {
  width: 18px;
  height: 18px;
  flex: none;
}
.foot-row.clear {
  gap: 13px;
}
.foot-row svg.small {
  width: 14px;
  height: 16px;
  margin-left: 1px;
}
.foot-row svg.tiny {
  width: 11px;
  height: 13px;
}
.plus-row {
  margin-top: 12px;
  gap: 14px;
}
.clear span {
  white-space: nowrap;
}
.new-tag {
  width: 50px;
  height: 52px;
  flex: none;
  margin-left: -7px;
  box-sizing: border-box;
  background: #fae69e;
  border-radius: 6px;
  color: #202123;
  font-size: 15.5px;
  text-align: center;
  line-height: 30px;
}
.gpt-main {
  flex: 1;
  min-width: 0;
  display: flex;
  flex-direction: column;
  background: #343541;
}
.thread {
  height: 838px;
  flex: none;
  overflow: hidden;
  background: #444654;
  box-sizing: border-box;
  padding-left: 376px;
  color: #d1d5db;
  font-size: 20px;
  line-height: 36.4px;
}
.thread ol,
.thread ul {
  margin: 0;
  padding-left: 29px;
}
.thread ol.no-mark {
  list-style: none;
  margin-top: -12px;
}
.thread ul {
  margin-top: 26px;
  list-style: none;
}
.thread ul + ol {
  margin-top: 26px;
}
.thread li {
  position: relative;
}
.thread li::marker {
  color: #8e8ea0;
}
.thread ul li::before {
  content: "";
  position: absolute;
  left: -19px;
  top: 11px;
  width: 4px;
  height: 5px;
  border-radius: 50%;
  background: #d1d5db;
}
.thread p {
  margin: 26px 0 0;
}
.composer {
  flex: 1;
  display: flex;
  flex-direction: column;
  align-items: center;
  box-sizing: border-box;
  padding-top: 60px;
  border-top: 1px solid #3a3b47;
}
.regen {
  width: 236px;
  height: 49px;
  box-sizing: border-box;
  border: 1px solid #565869;
  border-radius: 4px;
  display: flex;
  align-items: center;
  justify-content: center;
  gap: 10px;
  font-size: 17px;
  color: #d9d9e3;
}
.regen svg {
  width: 16px;
  height: 18px;
}
.prompt {
  width: 995px;
  height: 62px;
  margin-top: 11px;
  box-sizing: border-box;
  background: #40414f;
  border-radius: 6px;
  display: flex;
  align-items: center;
  justify-content: flex-end;
  padding-right: 20px;
  color: #8e8ea0;
  box-shadow: 0 0 12px rgba(0, 0, 0, 0.1);
}
.prompt svg {
  width: 18px;
  height: 20px;
  margin-top: 6px;
}
.legal {
  margin-top: 17px;
  font-size: 15px;
  line-height: 21px;
  color: #a6a6b2;
  white-space: nowrap;
}
.legal u {
  text-underline-offset: 3px;
}
```
